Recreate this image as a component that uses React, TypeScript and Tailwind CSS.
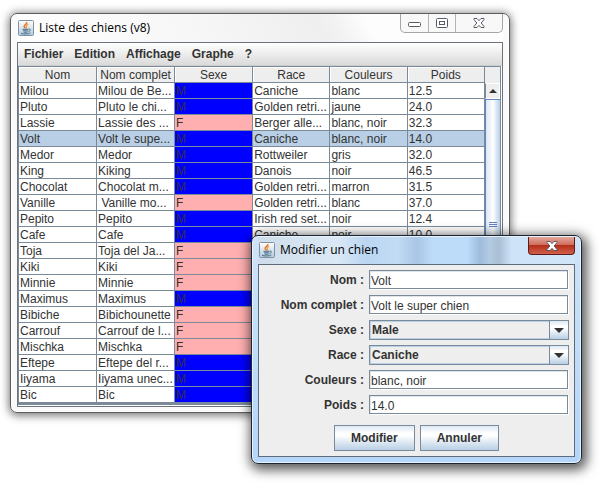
import React from "react";

type Dog = [string, string, "M" | "F", string, string, string];

const dogs: Dog[] = [
  ["Milou", "Milou de Be...", "M", "Caniche", "blanc", "12.5"],
  ["Pluto", "Pluto le chi...", "M", "Golden retri...", "jaune", "24.0"],
  ["Lassie", "Lassie des ...", "F", "Berger alle...", "blanc, noir", "32.3"],
  ["Volt", "Volt le supe...", "M", "Caniche", "blanc, noir", "14.0"],
  ["Medor", "Medor", "M", "Rottweiler", "gris", "32.0"],
  ["King", "Kiking", "M", "Danois", "noir", "46.5"],
  ["Chocolat", "Chocolat m...", "M", "Golden retri...", "marron", "31.5"],
  ["Vanille", " Vanille mo...", "F", "Golden retri...", "blanc", "37.0"],
  ["Pepito", "Pepito", "M", "Irish red set...", "noir", "12.4"],
  ["Cafe", "Cafe", "M", "Caniche", "noir", "10.0"],
  ["Toja", "Toja del Ja...", "F", "", "", ""],
  ["Kiki", "Kiki", "F", "", "", ""],
  ["Minnie", "Minnie", "F", "", "", ""],
  ["Maximus", "Maximus", "M", "", "", ""],
  ["Bibiche", "Bibichounette", "F", "", "", ""],
  ["Carrouf", "Carrouf de l...", "F", "", "", ""],
  ["Mischka", "Mischka", "F", "", "", ""],
  ["Eftepe", "Eftepe del r...", "M", "", "", ""],
  ["Iiyama", "Iiyama unec...", "M", "", "", ""],
  ["Bic", "Bic", "M", "", "", ""],
];

const headers = ["Nom", "Nom complet", "Sexe", "Race", "Couleurs", "Poids"];
const menus = ["Fichier", "Edition", "Affichage", "Graphe", "?"];

function JavaIcon() {
  return (
    <svg width="16" height="16" viewBox="0 0 16 16" fill="none" aria-hidden="true" className="shrink-0">
      <defs>
        <linearGradient id="tile" x1="0" y1="0" x2="0" y2="1">
          <stop offset="0" stopColor="#ffffff" />
          <stop offset="1" stopColor="#b5c9da" />
        </linearGradient>
      </defs>
      <rect x="0.5" y="0.5" width="15" height="15" rx="1" fill="url(#tile)" stroke="#7f92a5" />
      <path d="M8.8 2C9.4 4.2 5.6 4.9 6.2 6.7C6.5 7.4 7.4 7.7 7.5 8.5" stroke="#e8721c" strokeWidth="1.5" />
      <path d="M10.3 4.2C8.4 5.1 7.9 5.7 8.5 6.8C8.8 7.4 8.7 7.9 8.4 8.5" stroke="#f09a3c" strokeWidth="1.2" />
      <path d="M4.4 9.3H10.4M5.1 10.8H9.9M5.6 12.2H9.4M3 13.2C5 14.3 10.8 14.3 12.4 12.8" stroke="#44708f" strokeWidth="1" />
      <path d="M10.5 9.2C13 8.4 13.2 10.8 10.4 11.4" stroke="#44708f" strokeWidth="1" />
    </svg>
  );
}

function CloseGlyph() {
  return (
    <svg width="12" height="10" viewBox="0 0 12 10" aria-hidden="true">
      <path d="M1 0.5H4L6 2.6L8 0.5H11V1.5L8.2 5L11 8.5V9.5H8L6 7.4L4 9.5H1V8.5L3.8 5L1 1.5Z" fill="#fff" stroke="#555a66" />
    </svg>
  );
}

function DogTable() {
  return (
    <table className="w-full table-fixed border-separate border-spacing-0">
      <colgroup>
        <col className="w-[16.75%]" />
        <col className="w-[16.75%]" />
        <col className="w-[16.75%]" />
        <col />
        <col />
        <col />
      </colgroup>
      <thead>
        <tr>
          {headers.map((h) => (
            <th
              key={h}
              className="h-4 overflow-hidden border-r border-b border-[#7a8a99] bg-[#eeeeee] p-0 pt-px text-center leading-[14px] font-normal whitespace-nowrap shadow-[inset_1px_1px_0_#ffffff]"
            >
              {h}
            </th>
          ))}
        </tr>
      </thead>
      <tbody>
        {dogs.map((dog, row) => (
          <tr key={dog[0]} className={row === 3 ? "bg-[#b8cfe5]" : "bg-white"}>
            {dog.map((value, col) => (
              <td
                key={col}
                className={
                  "h-4 overflow-hidden border-r border-b border-[#7a8a99] p-0 pt-px pl-px leading-[14px] whitespace-pre " +
                  (col !== 2 ? "" : value === "M" ? "bg-[#0000ff]" : "bg-[#ffafaf]")
                }
              >
                {value}
              </td>
            ))}
          </tr>
        ))}
      </tbody>
    </table>
  );
}

function ListWindow() {
  return (
    <section className="rounded-[7px] border border-[#5c5c5c] bg-[linear-gradient(#fafafa,#fafafa)] px-1.5 pb-[5px] shadow-[inset_0_0_0_1px_#ffffff,0_0_8px_1px_rgba(0,0,0,0.35),0_3px_10px_rgba(0,0,0,0.3)]">
      <header className="flex h-7 items-start justify-between bg-[linear-gradient(60deg,#fefefe_0%,#f7f7f7_35%,#efefef_62%,#f3f3f3_66%,#fdfdfd_72%,#fdfdfd_100%)]">
        <div className="flex h-7 items-center gap-[5px] pl-px font-['Open_Sans',sans-serif] text-xs text-black">
          <JavaIcon />
          <h1>Liste des chiens (v8)</h1>
        </div>
        <div className="flex h-[19px] divide-x divide-[#b5b5b5] rounded-b-[5px] border border-t-0 border-[#a5a5a5] bg-[#f8f8f8]">
          <button aria-label="Réduire" className="flex w-7 items-center justify-center pt-1">
            <svg width="13" height="6" viewBox="0 0 13 6"><rect x="0.5" y="0.5" width="12" height="4" rx="1" fill="#fff" stroke="#555a66" /></svg>
          </button>
          <button aria-label="Agrandir" className="flex w-[27px] items-center justify-center">
            <svg width="12" height="10" viewBox="0 0 12 10"><rect x="0.5" y="0.5" width="11" height="9" rx="1" fill="#fff" stroke="#555a66" /><rect x="3.5" y="3.5" width="5" height="3" fill="#fff" stroke="#555a66" /></svg>
          </button>
          <button aria-label="Fermer" className="flex w-[46px] items-center justify-center">
            <CloseGlyph />
          </button>
        </div>
      </header>
      <div className="border border-[#6b747c] bg-[#eeeeee]">
        <nav className="flex h-[23px] items-center gap-[11px] border-b border-[#cccccc] bg-gradient-to-b from-white to-[#dadada] px-1.5 font-bold">
          {menus.map((m) => (
            <button key={m}>{m}</button>
          ))}
        </nav>
        <div className="bg-white pr-px pb-px">
          <div className="flex border border-b-2 border-[#7a8a99] bg-[#eeeeee]">
            <div className="min-w-0 flex-1">
              <DogTable />
            </div>
            <div className="flex w-[15px] flex-col">
              <div className="h-4" />
              <button aria-label="Défiler vers le haut" className="flex h-4 items-center justify-center border border-white border-l-[#7a8a99] bg-[#eeeeee]">
                <svg width="8" height="4" viewBox="0 0 8 4"><path d="M0 4H8L4 0Z" fill="#333333" /></svg>
              </button>
              <div className="flex h-[250px] items-center justify-center border border-r-0 border-[#6382bf] bg-gradient-to-r from-[#dbe8f4] via-white to-[#b8cfe5]">
                <div className="flex h-[5px] w-2 flex-col justify-center border-y border-[#6382bf]">
                  <div className="h-px bg-[#6382bf]" />
                </div>
              </div>
              <div className="flex-1 border-l border-[#7a8a99]" />
            </div>
          </div>
        </div>
      </div>
    </section>
  );
}

const labelClass = "text-right leading-5 font-bold";
const inputClass =
  "mr-px h-[19px] min-w-0 border border-[#7a8a99] bg-white pt-0.5 pl-px shadow-[inset_1px_1px_0_#dfe5ea,1px_1px_0_#ffffff] outline-none";

function TextRow({ id, label, value }: { id: string; label: string; value: string }) {
  return (
    <>
      <label htmlFor={id} className={labelClass}>{label}</label>
      <input id={id} defaultValue={value} className={inputClass} />
    </>
  );
}

function SelectRow({ id, label, options }: { id: string; label: string; options: string[] }) {
  return (
    <>
      <label htmlFor={id} className={labelClass}>{label}</label>
      <div className="grid h-5">
        <select
          id={id}
          className="col-start-1 row-start-1 h-5 appearance-none border border-[#7a8a99] bg-[#eeeeee] pl-0.5 font-bold shadow-[inset_0_0_0_1px_#b8cfe5] outline-none"
        >
          {options.map((o) => (
            <option key={o}>{o}</option>
          ))}
        </select>
        <span className="pointer-events-none col-start-1 row-start-1 flex h-5 w-5 items-center justify-center justify-self-end border border-[#7a8a99] bg-[linear-gradient(#dde8f3,#ffffff_30%,#ffffff_40%,#b8cfe5)]">
          <svg width="10" height="5" viewBox="0 0 10 5" aria-hidden="true">
            <path d="M0 0H10L5 5Z" fill="#333333" />
          </svg>
        </span>
      </div>
    </>
  );
}

const buttonClass =
  "h-[26px] border border-[#7a8a99] bg-[linear-gradient(#dde8f3,#ffffff_30%,#ffffff_40%,#b8cfe5)] px-4 font-bold";

function EditDialog() {
  return (
    <section
      role="dialog"
      aria-labelledby="dialog-title"
      className="absolute top-[235px] right-[27px] left-[251px] rounded-[7px] border border-[#1c2530] bg-[linear-gradient(#cfe3f8,#c5dff8_30%,#b4d6fa)] px-1.5 pb-1.5 shadow-[inset_0_0_0_1px_#e6f2fd,2px_3px_12px_3px_rgba(0,0,0,0.65)]"
    >
      <header className="mt-px flex h-[27px] items-start justify-between bg-[linear-gradient(90deg,#cfdcea_0%,#dbe8f5_25%,#bad6f2_34%,#c3dcf5_44%,#a9c6e4_50%,#bcdcfa_55%,#bcdcfa_66%,#9dbbdb_70%,#b4cbe2_73%,#a9bfd5_76%,#cfe3f8_80%,#d2e6fa_100%)]">
        <div className="flex h-[26px] items-center gap-[5px] pl-px font-['Open_Sans',sans-serif] text-xs text-black">
          <JavaIcon />
          <h2 id="dialog-title">Modifier un chien</h2>
        </div>
        <button
          aria-label="Fermer"
          className="flex h-[18px] w-[47px] items-center justify-center rounded-b-[4px] border border-t-0 border-[#5b1c1c] bg-[linear-gradient(#e4a79c,#d0705f_45%,#b5301b_50%,#d2604a)]"
        >
          <CloseGlyph />
        </button>
      </header>
      <form className="border border-[#5d6b7a] bg-[#eeeeee] p-[5px]" onSubmit={(e) => e.preventDefault()}>
        <div className="grid grid-cols-[100px_1fr] gap-[5px]">
          <TextRow id="nom" label="Nom :" value="Volt" />
          <TextRow id="complet" label="Nom complet :" value="Volt le super chien" />
          <SelectRow id="sexe" label="Sexe :" options={["Male", "Femelle"]} />
          <SelectRow id="race" label="Race :" options={["Caniche"]} />
          <TextRow id="couleurs" label="Couleurs :" value="blanc, noir" />
          <TextRow id="poids" label="Poids :" value="14.0" />
        </div>
        <div className="mt-2.5 flex justify-center gap-[5px]">
          <button className={buttonClass}>Modifier</button>
          <button className={buttonClass}>Annuler</button>
        </div>
      </form>
    </section>
  );
}

export default function App() {
  return (
    <main className="relative min-h-screen bg-white pt-[13px] pr-[99px] pl-2.5 font-['Liberation_Sans',Arial,sans-serif] text-xs text-[#333333]">
      <ListWindow />
      <EditDialog />
    </main>
  );
}
